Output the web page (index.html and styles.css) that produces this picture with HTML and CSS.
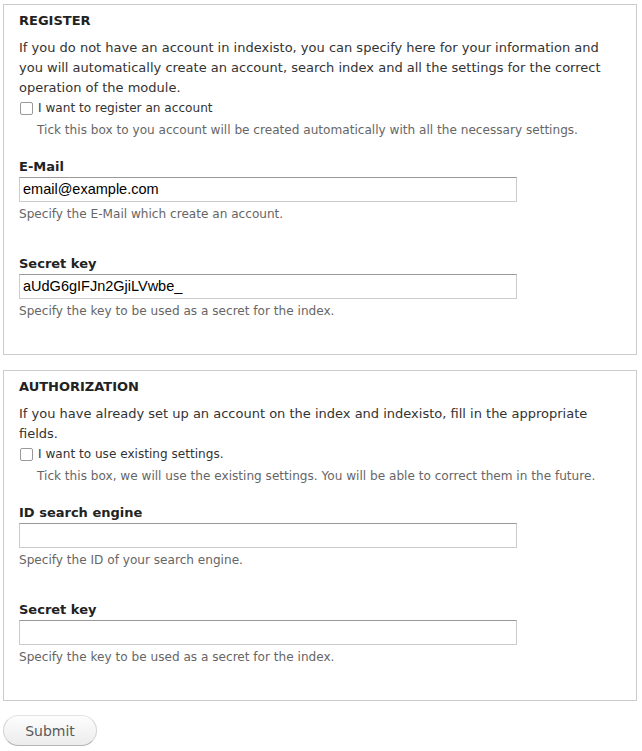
FILE: index.html
```html
<!DOCTYPE html>
<html>
<head>
<meta charset="utf-8">
<link rel="stylesheet" href="styles.css">
</head>
<body>
<form class="form">
  <div class="fieldset">
    <div class="legend">Register</div>
    <p class="intro">If you do not have an account in indexisto, you can specify here for your information and you will automatically create an account, search index and all the settings for the correct operation of the module.</p>
    <label class="check"><span class="box"></span><span>I want to register an account</span></label>
    <div class="desc indent">Tick this box to you account will be created automatically with all the necessary settings.</div>
    <div class="item first">
      <div class="label">E-Mail</div>
      <div class="input">email@example.com</div>
      <div class="desc">Specify the E-Mail which create an account.</div>
    </div>
    <div class="item">
      <div class="label">Secret key</div>
      <div class="input">aUdG6gIFJn2GjiLVwbe_</div>
      <div class="desc">Specify the key to be used as a secret for the index.</div>
    </div>
  </div>
  <div class="fieldset">
    <div class="legend">Authorization</div>
    <p class="intro">If you have already set up an account on the index and indexisto, fill in the appropriate fields.</p>
    <label class="check"><span class="box"></span><span>I want to use existing settings.</span></label>
    <div class="desc indent">Tick this box, we will use the existing settings. You will be able to correct them in the future.</div>
    <div class="item first">
      <div class="label">ID search engine</div>
      <div class="input"></div>
      <div class="desc">Specify the ID of your search engine.</div>
    </div>
    <div class="item">
      <div class="label">Secret key</div>
      <div class="input"></div>
      <div class="desc">Specify the key to be used as a secret for the index.</div>
    </div>
  </div>
  <div class="actions"><span class="button">Submit</span></div>
</form>
</body>
</html>
```

FILE: styles.css
```css
html, body {
  margin: 0;
  background: #fff;
}
body {
  padding: 4px 5px 0 3px;
  font-family: "DejaVu Sans", Verdana, sans-serif;
  font-size: 13px;
  line-height: 20px;
  color: #333;
}
.fieldset {
  border: 1px solid #ccc;
  padding: 0 15px 34px;
  margin: 0 0 15px;
}
.legend {
  margin-top: 6px;
  font-weight: bold;
  text-transform: uppercase;
  color: #222;
  line-height: 20px;
}
.intro {
  margin: 7px 0 0;
}
.check {
  display: flex;
  align-items: center;
  height: 20px;
  font-size: 12.1px;
}
.box {
  width: 11px;
  height: 11px;
  border: 1px solid #999;
  border-radius: 2px;
  margin: 0 5px 0 1px;
  background: #fff;
}
.desc {
  font-size: 12.1px;
  line-height: 18px;
  color: #666;
  margin-top: 3px;
}
.desc.indent {
  margin-left: 18px;
  margin-top: 3px;
}
.item {
  margin-top: 31px;
}
.item.first {
  margin-top: 18px;
}
.label {
  font-weight: bold;
  color: #222;
  line-height: 20px;
}
.input {
  width: 498px;
  height: 25px;
  box-sizing: border-box;
  border: 1px solid #ccc;
  border-top-color: #999;
  padding: 0 3px;
  font-family: "Liberation Sans", Arial, sans-serif;
  font-size: 14.5px;
  line-height: 22px;
  color: #000;
}
.item .desc {
  margin-top: 3px;
}
.actions {
  display: flex;
  margin-top: -1px;
}
.button {
  display: inline-flex;
  align-items: center;
  justify-content: center;
  width: 94px;
  height: 31px;
  box-sizing: border-box;
  border: 1px solid #d2d2d2;
  border-top-color: #e4e4e4;
  border-bottom-color: #b4b4b4;
  border-radius: 16px;
  background: linear-gradient(#fdfdfd, #ececec);
  color: #5a5a5a;
  font-size: 14px;
}
```
